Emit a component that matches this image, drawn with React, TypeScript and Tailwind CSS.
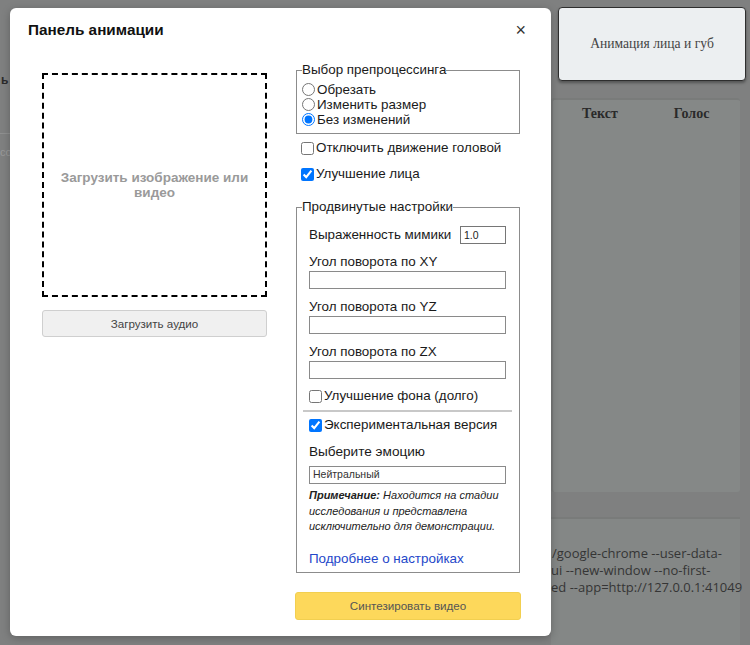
import React from "react";

const sans = "font-['Liberation_Sans',Arial,sans-serif]";

function Check({ label, checked }: { label: string; checked?: boolean }) {
  return (
    <label className="flex h-[16px] items-center gap-[2px] whitespace-nowrap text-[13.4px] leading-[16px] text-[#1a1a1a]">
      <input type="checkbox" defaultChecked={checked} className="m-0 h-[13px] w-[13px]" />
      <span>{label}</span>
    </label>
  );
}

function Radio({ label, checked }: { label: string; checked?: boolean }) {
  return (
    <label className="flex h-[15px] items-center gap-[2px] whitespace-nowrap text-[13.4px] leading-[15px] text-[#1a1a1a]">
      <input type="radio" name="prep" defaultChecked={checked} className="m-0 h-[13px] w-[13px]" />
      <span>{label}</span>
    </label>
  );
}

function AngleField({ label }: { label: string }) {
  return (
    <div className="mt-[10px] flex flex-col">
      <div className="h-[16px] text-[13.4px] leading-[16px] text-[#1a1a1a]">{label}</div>
      <input className="mt-[1px] h-[18px] w-full border border-[#8a8a8a] bg-white px-[3px] text-[10.5px]" />
    </div>
  );
}

export default function App() {
  return (
    <div className={`relative h-[645px] w-[750px] overflow-hidden bg-[#7f8080] ${sans}`}>
      {/* underlying page (dimmed) */}
      <div className="flex h-full">
        <div className="w-[551px] shrink-0">
          <div className="ml-[1px] mt-[72px] whitespace-nowrap text-[12px] font-bold leading-[16px] text-[#2b2b2b]">ь</div>
          <div className="mt-[45px] h-[1px] w-[12px] bg-[#8f9090]" />
          <div className="mt-[10px] whitespace-nowrap text-[11px] leading-[16px] text-[#9a9a9a]">co</div>
        </div>
        <div className="flex w-[199px] flex-col">
          <div className="ml-[7px] mt-[7px] flex h-[75px] w-[188px] items-center justify-center rounded-[4px] border border-[#2e2e2e] bg-[#eceff1] font-['Liberation_Serif',serif] text-[13.6px] text-[#444] shadow-[0_2px_3px_rgba(0,0,0,0.35)]">
            Анимация лица и губ
          </div>
          <div className="mt-[17px] h-[400px] w-[189px] rounded-[3px] border-l-[2px] border-t-[2px] border-[#797b7a] bg-[#858887]">
            <div className="flex pt-[3px] font-['Liberation_Serif',serif] text-[14px] font-bold text-[#2a2a2a]">
              <span className="ml-[29px]">Текст</span>
              <span className="ml-[56px]">Голос</span>
            </div>
          </div>
          <div className="mt-[25px] h-[130px] w-[189px] border-t-[2px] border-[#797b7a] bg-[#848786] pt-[26px] font-['Open_Sans',sans-serif] text-[13px] text-[#353535]">
            <div className="h-[17px] whitespace-nowrap pl-[1px] leading-[17px]">/google-chrome --user-data-</div>
            <div className="h-[17px] whitespace-nowrap leading-[17px]">ui --new-window --no-first-</div>
            <div className="h-[17px] whitespace-nowrap leading-[17px]">ed --app=http://127.0.0.1:41049</div>
          </div>
        </div>
      </div>

      {/* modal */}
      <div className="absolute left-[10px] top-[8px] h-[628px] w-[541px] rounded-[6px] bg-white shadow-[0_2px_8px_rgba(0,0,0,0.25)]">
        <div className="flex items-center justify-between pl-[18px] pr-[25px] pt-[12px]">
          <h2 className="text-[15.3px] font-bold leading-[20px] text-[#111]">Панель анимации</h2>
          <button className="text-[18px] leading-[20px] text-[#333]">×</button>
        </div>

        <div className="mt-[22px] flex gap-[28px] pl-[32px]">
          {/* left column */}
          <div className="flex w-[225px] flex-col pt-[11px]">
            <div className="flex h-[224px] flex-col items-center border-2 border-dashed border-black px-[8px] pt-[95px] text-center text-[13.5px] font-bold leading-[15px] text-[#9a9a9a]">
              Загрузить изображение или видео
            </div>
            <button className="mt-[13px] h-[27px] w-full rounded-[3px] border border-[#cfcfcf] bg-[#f0f0f0] text-[11.6px] text-[#444]">
              Загрузить аудио
            </button>
          </div>

          {/* right column */}
          <div className="flex w-[226px] flex-col">
            <fieldset className="mx-[1px] border border-[#8c8c8c] px-[5px] pb-[6px]">
              <legend className="p-0 text-[13.4px] leading-[16px] text-[#1a1a1a]">Выбор препроцессинга</legend>
              <div className="flex flex-col pt-[4px]">
                <Radio label="Обрезать" />
                <Radio label="Изменить размер" />
                <Radio label="Без изменений" checked />
              </div>
            </fieldset>

            <div className="ml-[6px] mt-[6px]">
              <Check label="Отключить движение головой" />
            </div>
            <div className="ml-[6px] mt-[10px]">
              <Check label="Улучшение лица" checked />
            </div>

            <fieldset className="mx-[1px] mt-[17px] border border-[#8c8c8c] px-[5px] pb-[5px]">
              <legend className="p-0 text-[13.4px] leading-[16px] text-[#1a1a1a]">Продвинутые настройки</legend>
              <div className="flex flex-col pl-[7px] pr-[8px]">
                <div className="mt-[11px] flex h-[18px] items-center justify-between">
                  <span className="whitespace-nowrap text-[13.4px] leading-[16px] text-[#1a1a1a]">Выраженность мимики</span>
                  <input
                    defaultValue="1.0"
                    className="h-[18px] w-[46px] border border-[#767676] bg-white px-[3px] text-[10.5px] text-[#222]"
                  />
                </div>
                <AngleField label="Угол поворота по XY" />
                <AngleField label="Угол поворота по YZ" />
                <AngleField label="Угол поворота по ZX" />
                <div className="mt-[9px]">
                  <Check label="Улучшение фона (долго)" />
                </div>
                <div className="-mx-[6px] mt-[6px] h-[2px] bg-[#c8c8c8]" />
                <div className="mt-[5px]">
                  <Check label="Экспериментальная версия" checked />
                </div>
                <div className="mt-[11px] h-[16px] text-[13.6px] leading-[16px] text-[#1a1a1a]">Выберите эмоцию</div>
                <div className="mt-[6px] flex h-[18px] items-center border border-[#8a8a8a] bg-white pl-[3px] text-[10.5px] text-[#333]">
                  Нейтральный
                </div>
                <p className="mt-[4px] whitespace-nowrap text-[11px] italic leading-[15.5px] text-[#222]">
                  <b>Примечание:</b> Находится на стадии
                  <br />
                  исследования и представлена
                  <br />
                  исключительно для демонстрации.
                </p>
                <a className="mt-[16px] h-[16px] whitespace-nowrap text-[13.4px] leading-[16px] text-[#2447c9]">Подробнее о настройках</a>
              </div>
            </fieldset>

            <button className="mt-[19px] h-[28px] w-full rounded-[3px] border border-[#f2cf50] bg-[#fdd85b] text-[11.6px] text-[#555]">
              Синтезировать видео
            </button>
          </div>
        </div>
      </div>
    </div>
  );
}
